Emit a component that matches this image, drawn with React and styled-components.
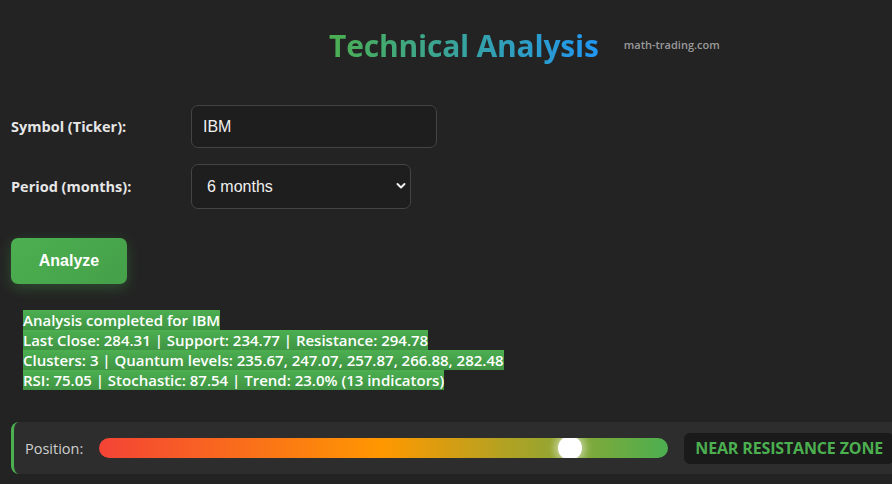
import React from "react";
import styled, { createGlobalStyle } from "styled-components";

const Global = createGlobalStyle`
  html, body { margin: 0; padding: 0; overflow: hidden; }
  body {
    background: #232323;
    color: #e0e0e0;
    font-family: "Open Sans", "Noto Sans", sans-serif;
  }
`;

const Page = styled.div`
  padding: 10px 0 0 11px;
  width: 920px;
  box-sizing: border-box;
`;

const Header = styled.header`
  display: flex;
  align-items: center;
  gap: 25px;
  padding-left: 318px;
  padding-top: 17px;
`;

const Title = styled.h1`
  margin: 0;
  font-family: "Open Sans", sans-serif;
  font-size: 30px;
  font-weight: 700;
  letter-spacing: -0.2px;
  background: linear-gradient(90deg, #4caf50, #2196f3);
  -webkit-background-clip: text;
  background-clip: text;
  color: transparent;
  line-height: 38px;
`;

const Domain = styled.span`
  font-family: "Open Sans", sans-serif;
  font-size: 11px;
  font-weight: 600;
  color: #9a9a9a;
  margin-top: -4px;
`;

const Form = styled.div`
  display: grid;
  grid-template-columns: 180px auto;
  row-gap: 16px;
  align-items: center;
  margin-top: 40px;
`;

const Label = styled.label`
  font-family: "Open Sans", sans-serif;
  font-weight: 700;
  font-size: 14.5px;
  color: #e6e6e6;
`;

const TextInput = styled.input`
  width: 246px;
  height: 43px;
  box-sizing: border-box;
  background: #1e1e1e;
  border: 1px solid #444;
  border-radius: 7px;
  color: #f0f0f0;
  font-family: "Liberation Sans", Arial, sans-serif;
  font-size: 16px;
  padding: 0 11px;
  outline: none;
`;

const SelectWrap = styled.div`
  position: relative;
  width: 220px;
`;

const Select = styled.select`
  width: 100%;
  height: 45px;
  box-sizing: border-box;
  appearance: none;
  -webkit-appearance: none;
  background: #1e1e1e;
  border: 1px solid #444;
  border-radius: 7px;
  color: #f0f0f0;
  font-family: "Liberation Sans", Arial, sans-serif;
  font-size: 16px;
  padding: 0 15px;
  outline: none;
`;

const Chevron = styled.svg`
  position: absolute;
  right: 5px;
  top: 18px;
  pointer-events: none;
`;

const Button = styled.button`
  margin-top: 29px;
  width: 116px;
  height: 46px;
  border: none;
  border-radius: 7px;
  background: linear-gradient(135deg, #4caf50, #45a049);
  color: #fff;
  font-family: "Liberation Sans", Arial, sans-serif;
  font-weight: 700;
  font-size: 16px;
  box-shadow: 0 4px 14px rgba(76, 175, 80, 0.3);
  cursor: pointer;
`;

const Status = styled.div`
  margin-top: 26px;
  padding-left: 12px;
  font-family: "Open Sans", sans-serif;
  font-weight: 600;
  font-size: 15px;
  line-height: 20px;
  white-space: pre-line;
`;

const Highlight = styled.span`
  background: linear-gradient(180deg, #4caf50, #3f9443);
  color: #fff;
`;

const PositionPanel = styled.div`
  margin-top: 32px;
  display: flex;
  align-items: center;
  gap: 15px;
  height: 52px;
  box-sizing: border-box;
  background: #2d2d2d;
  border-left: 3px solid #4caf50;
  border-radius: 8px;
  padding: 0 10px 0 11px;
  width: 900px;
`;

const PosLabel = styled.span`
  font-family: "Open Sans", sans-serif;
  font-size: 14.5px;
  color: #d0d0d0;
`;

const Bar = styled.div`
  position: relative;
  width: 569px;
  height: 20px;
  border-radius: 10px;
  overflow: hidden;
  background: linear-gradient(90deg, #f44336 0%, #ff9800 50%, #4caf50 100%);
  flex: none;
  margin-left: 1px;
`;

const Thumb = styled.div`
  position: absolute;
  top: 50%;
  width: 24px;
  height: 24px;
  border-radius: 50%;
  background: #fff;
  transform: translate(-50%, -50%);
  box-shadow: 0 0 8px 3px rgba(255, 255, 255, 0.55);
`;

const Badge = styled.div`
  margin-left: 1px;
  padding: 0 11px;
  height: 31px;
  display: flex;
  align-items: center;
  background: #1a1a1a;
  border-radius: 6px;
  color: #4caf50;
  font-family: "Open Sans", sans-serif;
  font-weight: 700;
  font-size: 16px;
  letter-spacing: -0.15px;
  white-space: nowrap;
`;

const statusText = `Analysis completed for IBM
Last Close: 284.31 | Support: 234.77 | Resistance: 294.78
Clusters: 3 | Quantum levels: 235.67, 247.07, 257.87, 266.88, 282.48
RSI: 75.05 | Stochastic: 87.54 | Trend: 23.0% (13 indicators)`;

export default function App() {
  const position = 82.8;
  return (
    <>
      <Global />
      <Page>
        <Header>
          <Title>Technical Analysis</Title>
          <Domain>math-trading.com</Domain>
        </Header>
        <Form>
          <Label>Symbol (Ticker):</Label>
          <TextInput defaultValue="IBM" />
          <Label>Period (months):</Label>
          <SelectWrap>
            <Select defaultValue="6">
              <option value="3">3 months</option>
              <option value="6">6 months</option>
              <option value="12">12 months</option>
            </Select>
            <Chevron width="10" height="8" viewBox="0 0 10 8">
              <path d="M1.5 2 L5 5.5 L8.5 2" fill="none" stroke="#f0f0f0" strokeWidth="2" strokeLinecap="round" strokeLinejoin="round" />
            </Chevron>
          </SelectWrap>
        </Form>
        <Button>Analyze</Button>
        <Status>
          <Highlight>{statusText}</Highlight>
        </Status>
        <PositionPanel>
          <PosLabel>Position:</PosLabel>
          <Bar>
            <Thumb style={{ left: `${position}%` }} />
          </Bar>
          <Badge>NEAR RESISTANCE ZONE</Badge>
        </PositionPanel>
      </Page>
    </>
  );
}
